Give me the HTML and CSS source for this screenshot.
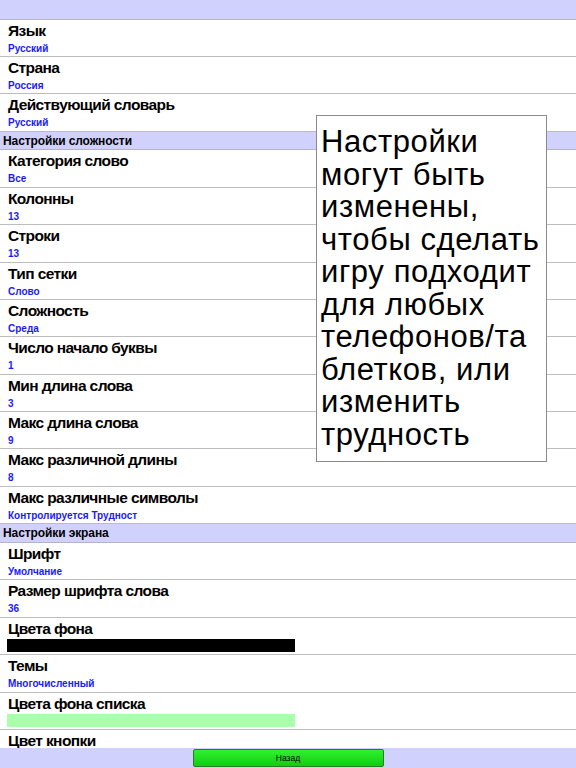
FILE: index.html
```html
<!DOCTYPE html>
<html lang="ru">
<head>
<meta charset="utf-8">
<title>Настройки</title>
<link rel="stylesheet" href="styles.css">
</head>
<body>
<div class="screen">
  <div class="topbar"></div>
  <div class="list">
    <div class="row"><div class="title">Язык</div><div class="value">Русский</div></div>
    <div class="row"><div class="title">Страна</div><div class="value">Россия</div></div>
    <div class="row"><div class="title">Действующий словарь</div><div class="value">Русский</div></div>
    <div class="section">Настройки сложности</div>
    <div class="row"><div class="title">Категория слово</div><div class="value">Все</div></div>
    <div class="row"><div class="title">Колонны</div><div class="value">13</div></div>
    <div class="row"><div class="title">Строки</div><div class="value">13</div></div>
    <div class="row"><div class="title">Тип сетки</div><div class="value">Слово</div></div>
    <div class="row"><div class="title">Сложность</div><div class="value">Среда</div></div>
    <div class="row"><div class="title">Число начало буквы</div><div class="value">1</div></div>
    <div class="row"><div class="title">Мин длина слова</div><div class="value">3</div></div>
    <div class="row"><div class="title">Макс длина слова</div><div class="value">9</div></div>
    <div class="row"><div class="title">Макс различной длины</div><div class="value">8</div></div>
    <div class="row"><div class="title">Макс различные символы</div><div class="value">Контролируется Трудност</div></div>
    <div class="section">Настройки экрана</div>
    <div class="row"><div class="title">Шрифт</div><div class="value">Умолчание</div></div>
    <div class="row"><div class="title">Размер шрифта слова</div><div class="value">36</div></div>
    <div class="row"><div class="title">Цвета фона</div><div class="swatch swatch-black"></div></div>
    <div class="row"><div class="title">Темы</div><div class="value">Многочисленный</div></div>
    <div class="row"><div class="title">Цвета фона списка</div><div class="swatch swatch-green"></div></div>
    <div class="row"><div class="title">Цвет кнопки</div><div class="value">&nbsp;</div></div>
  </div>
  <div class="bottombar"><button class="back">Назад</button></div>
  <div class="tooltip">Настройки могут быть изменены, чтобы сделать игру подходит для любых телефонов/та блетков, или изменить трудность</div>
</div>
</body>
</html>
```
FILE: styles.css
```css
* { box-sizing: border-box; }
html, body { margin: 0; padding: 0; }
body {
  font-family: "Liberation Sans", Arial, sans-serif;
  background: #fff;
  color: #000;
}
.screen {
  position: relative;
  width: 576px;
  height: 768px;
  display: flex;
  flex-direction: column;
  overflow: hidden;
}
.topbar {
  flex: none;
  height: 19.5px;
  background: #d1d1fd;
  border-bottom: 1.5px solid #b4b4c4;
}
.list {
  flex: 1;
  overflow: hidden;
  display: flex;
  flex-direction: column;
}
.row {
  flex: none;
  height: 37.4px;
  padding: 2px 0 0 8px;
  border-bottom: 1.5px solid #bdbdbd;
}
.title {
  font-size: 15.5px;
  font-weight: bold;
  line-height: 18px;
  letter-spacing: -0.6px;
  white-space: nowrap;
}
.value {
  font-size: 10px;
  font-weight: bold;
  line-height: 14px;
  margin-top: 2px;
  color: #1a1aff;
  white-space: nowrap;
}
.swatch {
  width: 288px;
  height: 13px;
  margin: 1px 0 0 -1px;
}
.swatch-black { background: #000; }
.swatch-green { background: #aaffaa; }
.section {
  flex: none;
  height: 18.7px;
  background: #d1d1fd;
  border-bottom: 1.5px solid #b4b4c4;
  padding: 2px 0 0 3px;
  font-size: 12px;
  font-weight: bold;
  line-height: 14px;
  letter-spacing: -0.1px;
}
.bottombar {
  flex: none;
  height: 20px;
  background: #d1d1fd;
  display: flex;
  justify-content: center;
  padding-top: 1px;
}
.back {
  width: 191px;
  height: 18px;
  margin: 0;
  padding: 0;
  border: 1px solid #2d7a2d;
  border-radius: 2px;
  background: linear-gradient(#2ff22f, #12cc12);
  font-family: "Liberation Sans", Arial, sans-serif;
  font-size: 8.5px;
  color: #000;
  line-height: 16px;
}
.tooltip {
  position: absolute;
  left: 316px;
  top: 115px;
  width: 231px;
  height: 347px;
  background: #fff;
  border: 1px solid #8a8a8a;
  padding: 10px 3px 0 4px;
  font-size: 31px;
  line-height: 32.5px;
  letter-spacing: 0.6px;
}
```
